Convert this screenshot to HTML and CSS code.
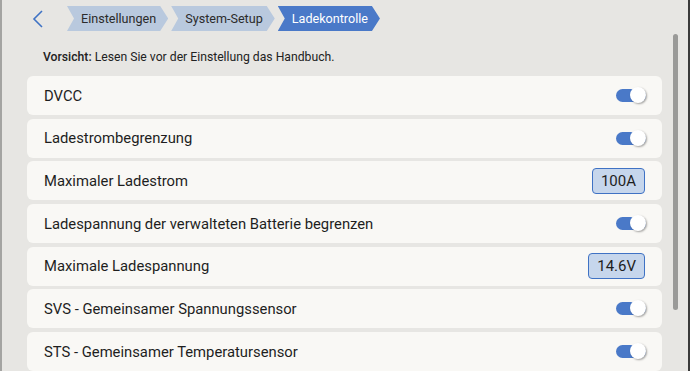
FILE: index.html
```html
<!DOCTYPE html>
<html lang="de">
<head>
    <meta charset="UTF-8">
    <title>Ladekontrolle</title>
    <link rel="stylesheet" href="styles.css">
</head>
<body>
    <div class="frame">
        <header class="topbar">
            <a class="back" href="#">
                <svg width="12" height="18" viewBox="0 0 12 18"><path d="M10 1 L2 9 L10 17" fill="none" stroke="#3f72c4" stroke-width="1.6"/></svg>
            </a>
            <nav class="crumbs">
                <a class="crumb" href="#">Einstellungen</a>
                <a class="crumb" href="#">System-Setup</a>
                <a class="crumb active" href="#">Ladekontrolle</a>
            </nav>
        </header>
        <p class="notice"><b>Vorsicht:</b> Lesen Sie vor der Einstellung das Handbuch.</p>
        <div class="content">
            <ul class="list">
                <li class="row"><span>DVCC</span><span class="toggle"></span></li>
                <li class="row"><span>Ladestrombegrenzung</span><span class="toggle"></span></li>
                <li class="row"><span>Maximaler Ladestrom</span><span class="value">100A</span></li>
                <li class="row"><span>Ladespannung der verwalteten Batterie begrenzen</span><span class="toggle"></span></li>
                <li class="row"><span>Maximale Ladespannung</span><span class="value">14.6V</span></li>
                <li class="row"><span>SVS - Gemeinsamer Spannungssensor</span><span class="toggle"></span></li>
                <li class="row"><span>STS - Gemeinsamer Temperatursensor</span><span class="toggle"></span></li>
            </ul>
            <div class="scrollbar"><div class="thumb"></div></div>
        </div>
    </div>
</body>
</html>
```

FILE: styles.css
```css
body {
    margin: 0;
    font-family: Roboto, "Liberation Sans", sans-serif;
    color: #222;
    background: #e7e6e3;
    overflow: hidden;
}
.frame {
    height: 371px;
    border-left: 2px solid #a4a4a2;
    border-right: 2px solid #3a3a3a;
    box-sizing: border-box;
    overflow: hidden;
}
.topbar {
    display: flex;
    align-items: center;
    height: 25px;
    padding-top: 6px;
}
.back {
    display: flex;
    margin-left: 30px;
    width: 12px;
}
.crumbs {
    display: flex;
    gap: 3px;
    margin-left: 23px;
}
.crumb {
    display: flex;
    align-items: center;
    height: 25px;
    padding: 0 12px 0 14px;
    font-size: 12.6px;
    color: #2b2b2b;
    text-decoration: none;
    background: #b9c9de;
    clip-path: polygon(0 0, calc(100% - 8px) 0, 100% 50%, calc(100% - 8px) 100%, 0 100%, 7px 50%);
}
.crumb.active {
    background: #4a79c8;
    color: #fff;
}
.notice {
    margin: 19px 0 0 41px;
    font-size: 12.2px;
    line-height: 15px;
    color: #222;
}
.notice b {
    font-weight: 500;
}
.content {
    display: flex;
    margin-top: 11px;
}
.list {
    list-style: none;
    margin: 0 0 0 25px;
    padding: 0;
    width: 635px;
}
.row {
    display: flex;
    align-items: center;
    justify-content: space-between;
    height: 39px;
    margin-bottom: 3.7px;
    padding: 0 16px 0 17px;
    background: #f9f8f5;
    border-radius: 6px;
    font-size: 14.8px;
    color: #1e1e1e;
}
.toggle {
    position: relative;
    width: 30px;
    height: 13px;
    border-radius: 7px;
    background: #4a79c8;
}
.toggle::after {
    content: "";
    position: absolute;
    right: 0;
    top: -2px;
    width: 16px;
    height: 16px;
    border-radius: 50%;
    background: #fff;
    box-shadow: 1px 1px 2px rgba(0, 0, 0, 0.35);
}
.value {
    padding: 3px 8px;
    margin-right: 1px;
    font-size: 15px;
    line-height: 18px;
    background: #c6d6ec;
    border: 1.5px solid #3f72c4;
    border-radius: 4px;
}
.scrollbar {
    margin-left: 11px;
}
.thumb {
    width: 5px;
    height: 276px;
    margin-top: -42px;
    border-radius: 3px;
    background: #9a9a98;
}
```
